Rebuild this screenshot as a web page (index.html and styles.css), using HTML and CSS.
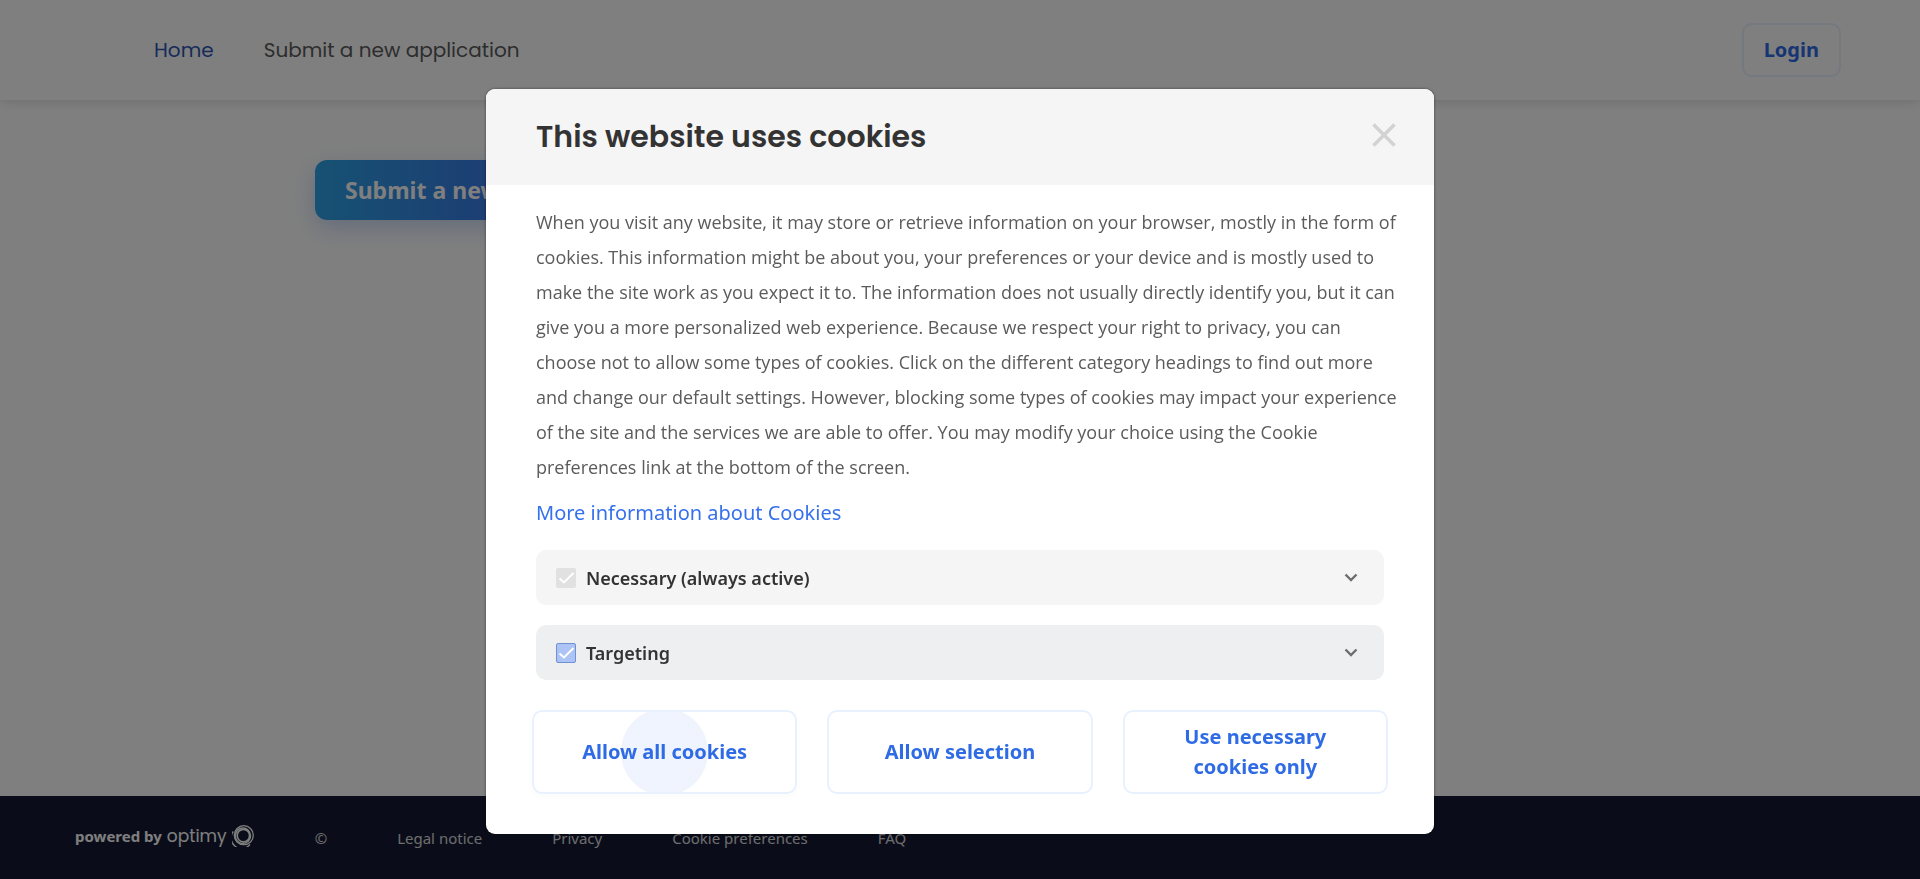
FILE: index.html
```html
<!DOCTYPE html>
<html lang="en">
<head>
<meta charset="utf-8">
<meta name="viewport" content="width=device-width, initial-scale=1">
<title>Home</title>
<link rel="stylesheet" href="styles.css">
</head>
<body>
<div class="page">
  <header class="site-header">
    <nav class="main-nav">
      <a class="nav-link active" href="#">Home</a>
      <a class="nav-link" href="#">Submit a new application</a>
    </nav>
    <button class="outline-button login" type="button">Login</button>
  </header>
  <main class="content">
    <a class="submit-button" href="#">Submit a new application</a>
  </main>
  <footer class="site-footer">
    <a class="brand" href="#"><span class="powered">powered by</span><span class="optimy">optimy</span><svg class="brand-mark" viewBox="0 0 22 22" fill="none" stroke="currentColor" aria-hidden="true"><circle cx="11.800" cy="10.200" r="9.500" stroke-width="1.300"/><path d="M1.300 6.500A10.200 10.200 0 0 0 18 19.400" stroke-width="1.300"/><circle cx="10.800" cy="10.800" r="7.700" stroke-width="1.500"/><circle cx="11.400" cy="10.600" r="6.200" stroke-width="1.700"/></svg></a>
    <nav class="footer-nav">
      <span>©</span>
      <a href="#">Legal notice</a>
      <a href="#">Privacy</a>
      <a href="#">Cookie preferences</a>
      <a href="#">FAQ</a>
    </nav>
  </footer>
</div>
<div class="overlay">
  <section class="modal" role="dialog" aria-modal="true" aria-labelledby="cookie-title">
    <div class="modal-header">
      <h2 class="modal-title" id="cookie-title">This website uses cookies</h2>
      <button class="close" type="button" aria-label="Close"><svg viewBox="0 0 24 24" fill="none" stroke="currentColor" stroke-width="3.500" aria-hidden="true"><path d="M1.500 1.500l21 21M22.500 1.500l-21 21"/></svg></button>
    </div>
    <div class="modal-body">
      <p class="description">When you visit any website, it may store or retrieve information on your browser, mostly in the form of cookies. This information might be about you, your preferences or your device and is mostly used to make the site work as you expect it to. The information does not usually directly identify you, but it can give you a more personalized web experience. Because we respect your right to privacy, you can choose not to allow some types of cookies. Click on the different category headings to find out more and change our default settings. However, blocking some types of cookies may impact your experience of the site and the services we are able to offer. You may modify your choice using the Cookie preferences link at the bottom of the screen.</p>
      <a class="more-link" href="#">More information about Cookies</a>
      <div class="categories">
        <div class="category">
          <label class="category-label"><span class="tick"><input type="checkbox" checked disabled><svg viewBox="0 0 20 20" aria-hidden="true"><path d="M3.500 10.500L8 14.500L17.500 5"/></svg></span>Necessary (always active)</label>
          <button class="expand" type="button" aria-label="Show necessary cookies"><svg viewBox="0 0 14 10" aria-hidden="true"><path d="M1.500 1.500L7 7L12.500 1.500"/></svg></button>
        </div>
        <div class="category selected">
          <label class="category-label"><span class="tick"><input type="checkbox" checked><svg viewBox="0 0 20 20" aria-hidden="true"><path d="M3.500 10.500L8 14.500L17.500 5"/></svg></span>Targeting</label>
          <button class="expand" type="button" aria-label="Show targeting cookies"><svg viewBox="0 0 14 10" aria-hidden="true"><path d="M1.500 1.500L7 7L12.500 1.500"/></svg></button>
        </div>
      </div>
      <div class="actions">
        <button class="outline-button pulsing" type="button">Allow all cookies</button>
        <button class="outline-button" type="button">Allow selection</button>
        <button class="outline-button" type="button">Use necessary cookies only</button>
      </div>
    </div>
  </section>
</div>
</body>
</html>
```
FILE: styles.css
```css
* { box-sizing: border-box; }

body {
  margin: 0;
  font-family: "Noto Sans", sans-serif;
  font-size: 18px;
  color: #5b5b5b;
  background: #fff;
}

a { color: inherit; text-decoration: none; }

button { font: inherit; cursor: pointer; }

.page {
  display: flex;
  flex-direction: column;
  min-height: 100vh;
}

.site-header {
  display: flex;
  align-items: center;
  justify-content: space-between;
  height: 100px;
  padding: 0 79px 0 154px;
  box-shadow: 0 1px 12px rgba(0, 0, 0, 0.16);
}

.main-nav {
  display: flex;
  gap: 50px;
  font-family: Poppins, Inter, sans-serif;
  font-size: 20px;
  font-weight: 400;
}

.nav-link.active { color: #2f57b5; }

.outline-button {
  padding: 8px 20px;
  border: 2px solid #e9f0fe;
  border-radius: 10px;
  background: transparent;
  color: #2e6be5;
  font-size: 20px;
  font-weight: 700;
  line-height: 30px;
}

.login { height: 54px; }

.content {
  flex: 1;
  padding: 60px 315px;
}

.submit-button {
  display: inline-block;
  padding: 0 30px;
  border-radius: 12px;
  background: linear-gradient(90deg, #2ea3e6, #3a76e8 200px);
  box-shadow: 0 8px 24px rgba(60, 120, 220, 0.28);
  color: #fff;
  font-size: 23px;
  font-weight: 700;
  line-height: 60px;
}

.site-footer {
  display: flex;
  align-items: center;
  gap: 61px;
  height: 83px;
  padding: 0 75px;
  background: #141a33;
  color: #dcdcdc;
}

.brand {
  display: flex;
  align-items: center;
  padding-bottom: 4px;
  color: #fff;
}

.powered {
  margin-right: 5px;
  font-size: 15px;
  font-weight: 700;
}

.optimy {
  margin-right: 5px;
  font-family: Poppins, Lato, sans-serif;
  font-size: 17px;
}

.brand-mark { width: 22px; height: 22px; }

.footer-nav {
  display: flex;
  gap: 70px;
  font-size: 15px;
}

.overlay {
  position: fixed;
  inset: 0;
  display: flex;
  align-items: flex-start;
  justify-content: center;
  padding-top: 89px;
  background: rgba(0, 0, 0, 0.5);
}

.modal {
  width: 948px;
  max-width: 100%;
  overflow: hidden;
  border-radius: 9px;
  background: #fff;
  box-shadow: 0 0 3px rgba(0, 0, 0, 0.5);
}

.modal-header {
  display: flex;
  align-items: center;
  justify-content: space-between;
  height: 96px;
  padding: 0 38px 0 50px;
  background: #f5f5f5;
}

.modal-title {
  margin: 0;
  color: #333;
  font-family: Poppins, Inter, sans-serif;
  font-size: 30px;
  font-weight: 600;
}

.close {
  width: 24px;
  height: 24px;
  margin-bottom: 4px;
  padding: 0;
  border: 0;
  background: none;
  color: #d2d2d2;
}

.close svg { display: block; }

.modal-body { padding: 20px 50px 40px; }

.description {
  margin: 0 -14px 10px 0;
  font-family: "Open Sans", "Noto Sans", sans-serif;
  line-height: 35px;
}

.more-link {
  display: block;
  color: #3671ec;
  font-size: 20px;
  line-height: 35px;
}

.categories {
  display: grid;
  gap: 20px;
  margin: 20px 0 30px;
}

.category {
  display: flex;
  align-items: center;
  justify-content: space-between;
  height: 55px;
  padding: 0 26px 0 20px;
  border-radius: 10px;
  background: #f5f5f5;
}

.category.selected { background: #eeeff1; }

.category-label {
  display: flex;
  align-items: center;
  gap: 10px;
  color: #333;
  font-weight: 600;
}

.tick { display: grid; width: 20px; height: 20px; }

.tick > * { grid-area: 1 / 1; width: 20px; height: 20px; }

.tick input {
  appearance: none;
  margin: 0;
  border-radius: 2px;
  background: #e1e1e1;
}

.selected .tick input {
  border: 1px solid #7190d0;
  background: #abc3f5;
}

.tick svg {
  fill: none;
  stroke: #fff;
  stroke-width: 2;
  pointer-events: none;
}

.expand {
  padding: 0;
  border: 0;
  background: none;
}

.expand svg {
  display: block;
  width: 14px;
  height: 10px;
  fill: none;
  stroke: #6e6e6e;
  stroke-width: 2.4;
}

.actions {
  display: grid;
  grid-template-columns: repeat(3, 1fr);
  gap: 30px;
  margin: 0 -4px;
}

.actions .outline-button {
  min-height: 84px;
  padding: 10px 40px;
}

.actions .pulsing {
  background: radial-gradient(circle at 50% 50%, rgba(46, 107, 229, 0.08) 43px, transparent 44px) border-box;
  box-shadow: 0 3px 8px rgba(0, 0, 0, 0.02);
}
```
